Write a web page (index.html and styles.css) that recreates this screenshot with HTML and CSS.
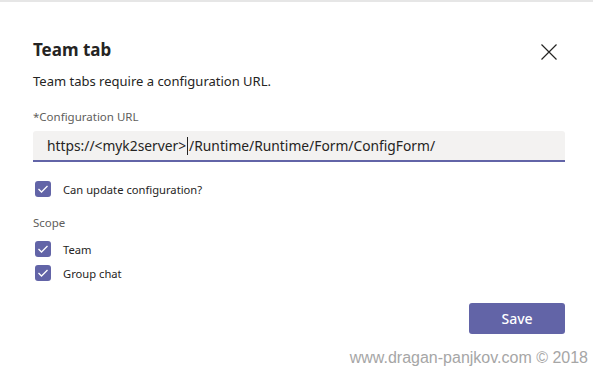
FILE: index.html
```html
<!DOCTYPE html>
<html>
<head>
<meta charset="utf-8">
<link rel="stylesheet" href="styles.css">
</head>
<body>
<div class="page">
  <div class="dialog">
    <div class="header">
      <h1 class="title">Team tab</h1>
      <svg class="close" width="16" height="16" viewBox="0 0 16 16"><path d="M0.5 0.5 L15.5 15.5 M15.5 0.5 L0.5 15.5" stroke="#252423" stroke-width="1.2" fill="none"/></svg>
    </div>
    <p class="subtitle">Team tabs require a configuration URL.</p>
    <div class="label">*Configuration URL</div>
    <div class="input"><span>https://&lt;myk2server&gt;</span><span class="caret"></span><span>/Runtime/Runtime/Form/ConfigForm/</span></div>
    <label class="check first"><span class="box"><svg width="12" height="10" viewBox="0 0 12 10"><path d="M1.5 5 L4.5 8 L10.5 2" stroke="#fff" stroke-width="1.3" fill="none"/></svg></span>Can update configuration?</label>
    <div class="label scope">Scope</div>
    <label class="check"><span class="box"><svg width="12" height="10" viewBox="0 0 12 10"><path d="M1.5 5 L4.5 8 L10.5 2" stroke="#fff" stroke-width="1.3" fill="none"/></svg></span>Team</label>
    <label class="check"><span class="box"><svg width="12" height="10" viewBox="0 0 12 10"><path d="M1.5 5 L4.5 8 L10.5 2" stroke="#fff" stroke-width="1.3" fill="none"/></svg></span>Group chat</label>
    <div class="actions"><button class="save">Save</button></div>
  </div>
  <div class="footer">www.dragan-panjkov.com © 2018</div>
</div>
</body>
</html>
```
FILE: styles.css
```css
html, body {
  margin: 0;
  padding: 0;
  background: #fff;
}
body {
  font-family: "Noto Sans", "Open Sans", sans-serif;
  color: #252423;
  width: 599px;
  height: 369px;
  overflow: hidden;
}
.page {
  width: 593px;
  border-top: 2px solid #e6e6e6;
  position: relative;
  height: 367px;
}
.dialog {
  padding: 0 28px 0 33px;
}
.header {
  display: flex;
  justify-content: space-between;
  align-items: center;
  padding-top: 33px;
  height: 30px;
}
.title {
  margin: 0;
  font-size: 17px;
  font-weight: 700;
  line-height: 30px;
}
.close {
  margin-right: 8px;
  margin-top: 4px;
}
.subtitle {
  margin: 6px 0 0;
  font-size: 13px;
  line-height: 20px;
}
.label {
  font-size: 11.5px;
  color: #605e5c;
  line-height: 16px;
  margin-top: 18px;
}
.input {
  margin-top: 6px;
  height: 29px;
  background: #f3f2f1;
  border-bottom: 2px solid #6264a7;
  border-radius: 3px 3px 0 0;
  display: flex;
  align-items: center;
  padding-left: 14px;
  font-size: 13.8px;
}
.caret {
  display: inline-block;
  width: 1px;
  height: 18px;
  background: #252423;
  margin: 0 1px 0 1px;
}
.check {
  display: flex;
  align-items: center;
  font-size: 11.2px;
  height: 16px;
  margin-top: 8px;
  padding-left: 2px;
}
.check.first {
  margin-top: 19px;
}
.box {
  width: 16px;
  height: 16px;
  border-radius: 3px;
  background: #6264a7;
  display: flex;
  align-items: center;
  justify-content: center;
  margin-right: 12px;
}
.label.scope {
  margin-top: 18px;
}
.scope + .check {
  margin-top: 10px;
}
.actions {
  display: flex;
  justify-content: flex-end;
  margin-top: 22px;
}
.save {
  width: 96px;
  height: 31px;
  border: none;
  border-radius: 3px;
  background: #6264a7;
  color: #fff;
  font-family: "Noto Sans", "Open Sans", sans-serif;
  font-size: 14px;
  font-weight: 500;
}
.footer {
  position: absolute;
  right: 5px;
  bottom: 2px;
  font-family: "Liberation Sans", Arial, sans-serif;
  font-size: 16px;
  color: #a6a6a6;
}
```
